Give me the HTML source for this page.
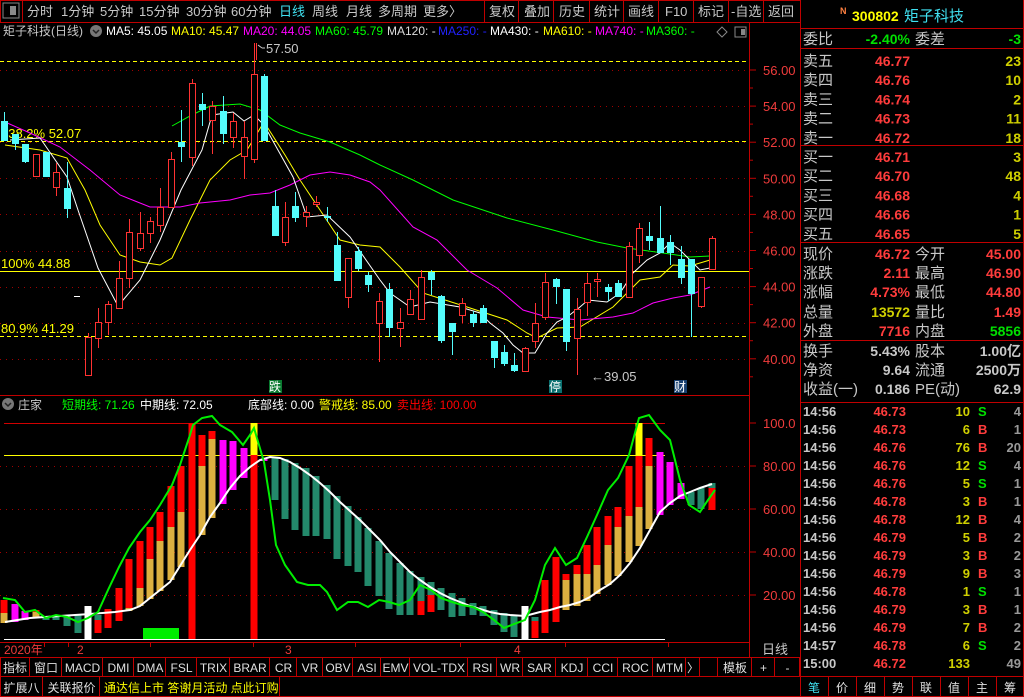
<!DOCTYPE html>
<html><head><meta charset="utf-8"><style>
html,body{margin:0;padding:0;background:#000;overflow:hidden}
svg{display:block}
text{font-family:"Liberation Sans","Noto Sans CJK SC",sans-serif;font-size:13px}
</style></head><body>
<svg id="s" width="1024" height="697" xmlns="http://www.w3.org/2000/svg"></svg>
<script>
var o='';
function R(x,y,w,h,f,st){o+='<rect x="'+x+'" y="'+y+'" width="'+w+'" height="'+h+'" fill="'+f+'"'+(st?' stroke="'+st+'"':'')+'/>';}
function L(x1,y1,x2,y2,c,extra){o+='<line x1="'+x1+'" y1="'+y1+'" x2="'+x2+'" y2="'+y2+'" stroke="'+c+'" '+(extra||'')+'/>';}
function T(x,y,s,c,extra){o+='<text x="'+x+'" y="'+y+'" fill="'+c+'" '+(extra||'')+'>'+s+'</text>';}
function P(pts,c,w){o+='<polyline fill="none" stroke="'+c+'" stroke-width="'+(w||1)+'" points="'+pts.map(function(p){return p.join(',')}).join(' ')+'"/>';}
var RED='#c00000';
var F12='style="font-size:12px"';
// toolbar
R(0,0,1024,22,'#000');
R(3,3,16,15,'#000','#888');R(10,6,6,9,'#888');
var tb=[['分时',27],['1分钟',61],['5分钟',100],['15分钟',139],['30分钟',186],['60分钟',231],['日线',279],['周线',312],['月线',346],['多周期',378],['更多〉',423]];
tb.forEach(function(t){T(t[1],16,t[0],t[0]=='日线'?'#40e0f0':'#c8c8c8');});
var rb=[['复权',489],['叠加',524],['历史',559],['统计',594],['画线',628],['F10',665],['标记',698],['-自选',731],['返回',768]];
rb.forEach(function(t){T(t[1],16,t[0],'#c8c8c8');});
[22,484,518,553,589,623,658,693,728,763].forEach(function(x){L(x+.5,0,x+.5,22,RED);});
L(0,.5,800,.5,RED);L(0,22.5,800,22.5,RED);L(.5,0,.5,22,RED);
// MA legend
T(3,35,'矩子科技(日线)','#c8c8c8',F12);
o+='<circle cx="96" cy="31" r="6" fill="#777"/><path d="M93 30 l3 3 l3 -3" stroke="#222" fill="none" stroke-width="1.5"/>';
T(106,35,'MA5: 45.05','#fff',F12);T(171,35,'MA10: 45.47','#ff0',F12);T(243,35,'MA20: 44.05','#f0f',F12);T(315,35,'MA60: 45.79','#0f0',F12);
T(387,35,'MA120: -','#ddd',F12);T(438,35,'MA250: -','#22f',F12);T(490,35,'MA430: -','#fff',F12);T(543,35,'MA610: -','#ff0',F12);T(595,35,'MA740: -','#f0f',F12);T(646,35,'MA360: -','#0f0',F12);
o+='<path d="M722 27 l5 5 l-5 5 l-5 -5z" stroke="#888" fill="none"/>';R(735,27,11,10,'#000','#888');R(741,29,4,6,'#888');
// main grid
[70,106,142,178,214,251,287,323,359].forEach(function(y){L(0,y+.5,750,y+.5,'#a00000','stroke-dasharray="1,5"');});
[61,141,336].forEach(function(y){L(0,y+.5,750,y+.5,'#ff0','stroke-dasharray="4,3"');});
L(0,271.5,750,271.5,'#ff0');
// right axis main
L(749.5,22,749.5,657,RED);
var pl=['56.00','54.00','52.00','50.00','48.00','46.00','44.00','42.00','40.00'];
pl.forEach(function(s,i){var y=70+i*36.1;L(750,y,756,y,RED);L(750,y+18,753,y+18,RED);T(763,y+5,s,'#f03c3c');});
T(1,138,'138.2% 52.07','#ff0');T(1,268,'100% 44.88','#ff0');T(1,333,'80.9% 41.29','#ff0');
// MA lines
P([[5,145],[40,150],[67,158],[85,190],[100,225],[120,255],[140,262],[160,265],[172,258],[190,220],[210,180],[230,160],[247,150],[264,122],[285,155],[300,180],[320,210],[340,240],[360,245],[380,247],[400,267],[423,293],[467,307],[507,320],[527,333],[537,338],[557,328],[580,327],[613,307],[640,280],[660,277],[673,265],[690,266],[710,260]],'#ff0');
P([[5,122],[30,133],[60,147],[90,170],[120,195],[150,207],[180,207],[200,203],[230,200],[250,195],[270,193],[290,185],[310,175],[330,172],[350,175],[370,182],[380,190],[413,227],[437,240],[467,270],[497,288],[523,310],[547,317],[580,320],[613,317],[633,313],[653,303],[673,298],[690,295],[710,287]],'#f0f');
P([[172,126],[190,116],[210,106],[240,104],[260,110],[280,125],[300,133],[330,142],[360,155],[380,165],[413,180],[453,200],[507,218],[553,230],[597,242],[627,248],[663,253],[690,257],[710,256]],'#0f0');
P([[10,140],[40,138],[67,177],[78,210],[98,268],[118,306],[140,280],[160,240],[181,190],[202,150],[212,115],[233,112],[244,121],[254,115],[264,125],[293,177],[307,217],[327,215],[350,237],[373,270],[380,280],[390,293],[410,307],[430,302],[460,307],[480,313],[490,323],[503,333],[513,345],[523,353],[535,353],[547,333],[557,322],[567,317],[580,307],[588,300],[607,302],[620,293],[633,273],[647,260],[660,253],[670,243],[680,250],[690,260],[700,270],[710,268]],'#fff');
// candles
var C=[[4,121,141,112,141,'c'],[15,134,144,134,150,'c'],[25,144,162,144,163,'c'],[36,154,176,154,176,'r'],[46,152,177,152,177,'c'],[56,172,187,163,196,'r'],[67,188,209,162,218,'c'],
[88,337,375,333,375,'r'],[98,322,338,308,348,'r'],[108,304,322,301,335,'r'],[119,278,308,261,308,'r'],[129,232,278,219,288,'r'],[140,233,248,212,251,'r'],[150,221,233,217,243,'r'],[160,207,225,188,232,'r'],[171,159,207,152,207,'r'],[181,142,147,110,162,'c'],[192,83,157,79,166,'r'],[202,104,110,93,126,'c'],[212,106,120,101,154,'r'],[223,111,134,96,144,'c'],[233,121,137,113,148,'r'],[244,137,156,121,179,'r'],[254,74,159,43,163,'r'],[264,76,141,74,141,'c'],[275,206,236,190,236,'c'],[285,217,242,202,246,'r'],[295,206,218,192,222,'c'],[306,212,216,206,227,'r'],[316,202,204,196,207,'r'],[327,216,218,207,222,'c'],[337,245,281,232,281,'c'],[348,258,297,258,308,'r'],[358,251,269,247,271,'c'],[368,275,285,272,292,'c'],[379,301,323,293,362,'r'],[389,289,328,283,337,'c'],[400,322,328,308,347,'r'],[410,299,314,290,314,'r'],[421,277,319,270,319,'r'],[431,272,280,270,295,'c'],[441,296,341,295,343,'c'],[452,323,332,323,355,'c'],[462,303,315,298,323,'r'],[473,314,323,311,327,'c'],[483,308,323,305,323,'c'],[494,341,358,341,368,'c'],[504,352,364,345,366,'c'],[514,365,371,353,372,'c'],[525,348,371,347,371,'r'],[535,323,341,303,348,'r'],[545,282,317,273,320,'r'],[556,279,287,278,304,'c'],[566,289,342,289,351,'c'],[577,309,338,298,375,'r'],[587,283,302,273,316,'r'],[597,279,281,273,297,'r'],[608,287,292,284,301,'c'],[618,283,297,280,297,'c'],[629,246,297,242,297,'r'],[639,228,255,223,263,'r'],[649,236,241,222,250,'c'],[660,238,253,206,253,'c'],[670,242,253,235,265,'c'],[681,259,278,246,284,'c'],[691,259,294,259,337,'c'],[701,277,306,277,308,'r'],[712,238,269,236,270,'r']];
C.forEach(function(c){var col=c[5]=='r'?'#ff3232':'#54fcfc';L(c[0]+.5,c[3],c[0]+.5,c[4],col);
 if(c[5]=='r'){R(c[0]-2.5,c[1]+.5,6,Math.max(1,c[2]-c[1]),'#000',col);}else{R(c[0]-3,c[1],7,Math.max(2,c[2]-c[1]),col);}});
L(74,296.5,80,296.5,'#fff');
// annotations
L(256.5,43,256.5,60,'#ff3232');T(266,53,'57.50','#c8c8c8');o+='<path d="M262 48 l-4 -3 m4 3 h3" stroke="#ccc" fill="none"/>';
T(591,381,'←39.05','#c8c8c8');
R(269,380,13,13,'#0a7a30');T(269,391,'跌','#fff',F12);
R(549,380,13,13,'#0a7070');T(549,391,'停','#fff',F12);
R(674,380,13,13,'#184070');T(674,391,'财','#fff',F12);
L(0,395.5,750,395.5,RED);
// lower header
o+='<circle cx="8" cy="404" r="6" fill="#777"/><path d="M5 403 l3 3 l3 -3" stroke="#222" fill="none" stroke-width="1.5"/>';
T(18,409,'庄家','#c8c8c8',F12);T(62,409,'短期线: 71.26','#0f0',F12);T(140,409,'中期线: 72.05','#fff',F12);T(248,409,'底部线: 0.00','#fff',F12);T(319,409,'警戒线: 85.00','#ff0',F12);T(397,409,'卖出线: 100.00','#f00',F12);
[466,509,552,595].forEach(function(y){L(0,y+.5,750,y+.5,'#a00000','stroke-dasharray="1,5"');});
L(4,423.5,665,423.5,'#d00000');L(4,455.5,665,455.5,'#ff0');L(4,639.5,665,639.5,'#fff');
[['100.0',423],['80.00',466],['60.00',509],['40.00',552],['20.00',595]].forEach(function(a){L(750,a[1],756,a[1],RED);T(763,a[1]+5,a[0],'#f03c3c');});
var Rr='#ff0000',Tn='#dcb040',M='#ff00ff',G='#23896b',W='#ffffff',Y='#ffff00';
var B=[[4,[[600,613,Rr],[613,623,Tn]]],[15,[[604,622,M]]],[25,[[611,620,M]]],[36,[[610,612,Rr],[612,618,Tn]]],[46,[[616,620,G]]],[56,[[615,620,G]]],[67,[[615,626,G]]],[78,[[615,633,G]]],[88,[[606,639,W]]],[98,[[615,620,G],[620,633,Rr]]],[108,[[609,628,Rr]]],[119,[[588,621,Rr]]],[129,[[559,608,Rr],[608,611,Tn]]],[140,[[541,588,Rr],[588,606,Tn]]],[150,[[527,559,Rr],[559,599,Tn]]],[160,[[512,541,Rr],[541,591,Tn]]],[171,[[486,527,Rr],[527,580,Tn]]],[181,[[466,512,Rr],[512,567,Tn]]],[192,[[423,639,Rr]]],[202,[[435,466,Rr],[466,535,Tn]]],[212,[[431,439,Rr],[439,518,Tn]]],[223,[[440,504,M]]],[233,[[441,490,M]]],[244,[[448,478,M]]],[254,[[423,455,Y],[455,639,Rr]]],[264,[[459,461,M]]],[275,[[458,500,G]]],[285,[[459,519,G]]],[295,[[463,530,G]]],[306,[[468,536,G]]],[316,[[476,536,G]]],[327,[[485,539,G]]],[337,[[496,559,G]]],[348,[[506,566,G]]],[358,[[517,572,G]]],[368,[[528,586,G]]],[379,[[541,596,G]]],[389,[[553,609,G]]],[400,[[563,615,G]]],[410,[[571,615,G]]],[421,[[577,601,G],[601,615,Rr]]],[431,[[582,595,G],[595,612,Rr]]],[441,[[588,610,G]]],[452,[[593,617,G]]],[462,[[598,616,G]]],[473,[[603,615,G]]],[483,[[606,616,G]]],[494,[[610,625,G]]],[504,[[613,632,G]]],[514,[[615,637,G]]],[525,[[606,639,W]]],[535,[[617,621,G],[621,638,Rr]]],[545,[[580,633,Rr]]],[556,[[557,622,Rr]]],[566,[[574,580,Rr],[580,610,Tn]]],[577,[[565,574,Rr],[574,606,Tn]]],[587,[[545,574,Rr],[574,601,Tn]]],[597,[[527,565,Rr],[565,594,Tn]]],[608,[[516,545,Rr],[545,585,Tn]]],[618,[[507,527,Rr],[527,576,Tn]]],[629,[[466,516,Rr],[516,562,Tn]]],[639,[[423,456,Y],[456,507,Rr],[507,546,Tn]]],[649,[[438,466,Rr],[466,529,Tn]]],[660,[[452,515,M]]],[670,[[462,505,M]]],[681,[[483,499,M]]],[691,[[492,505,G]]],[701,[[488,509,G]]],[712,[[483,488,G],[488,510,Rr]]]];
B.forEach(function(b){b[1].forEach(function(s){R(b[0]-3.5,s[0],7,s[1]-s[0],s[2]);});});
R(143,628,36,11,'#00ee00');
P([[5,622],[30,618],[60,616],[90,614],[115,612],[130,610],[140,606],[150,598],[160,590],[170,582],[180,566],[190,550],[200,535],[210,517],[220,503],[230,488],[240,476],[250,467],[260,460],[270,457],[280,458],[290,462],[300,468],[310,475],[320,483],[330,492],[340,502],[350,511],[360,520],[370,530],[380,540],[390,552],[400,562],[410,572],[420,580],[430,587],[440,593],[450,598],[460,602],[470,606],[480,609],[490,612],[500,614],[510,615],[525,616],[540,612],[550,610],[560,607],[570,605],[580,602],[590,597],[600,590],[610,584],[620,575],[630,563],[640,548],[650,530],[660,512],[670,503],[680,496],[690,492],[700,488],[712,484]],'#fff',2);
P([[3,598],[15,600],[25,612],[35,610],[46,618],[56,615],[67,617],[78,622],[88,618],[98,612],[108,590],[119,567],[129,548],[140,532],[150,520],[160,505],[172,485],[180,465],[190,435],[193,425],[202,418],[212,416],[220,425],[232,432],[243,445],[250,435],[254,428],[264,462],[270,500],[276,545],[285,565],[297,582],[308,585],[320,585],[327,592],[337,610],[348,602],[358,602],[368,607],[379,600],[389,602],[399,605],[410,600],[420,585],[431,590],[441,598],[452,602],[462,605],[473,607],[483,612],[494,620],[504,628],[514,624],[525,620],[535,600],[545,565],[555,548],[566,565],[577,558],[587,537],[597,515],[608,490],[618,478],[629,455],[639,418],[649,415],[660,430],[670,440],[680,480],[689,505],[700,512],[708,500],[715,490]],'#00ee00',2);
L(0,642.5,750,642.5,RED);L(0,657.5,800,657.5,RED);
T(4,654,'2020年','#f03c3c',F12);T(77,654,'2','#f03c3c',F12);T(285,654,'3','#f03c3c',F12);T(514,654,'4','#f03c3c',F12);
[44,68,150,253,355,460,565,668].forEach(function(x){L(x+.5,643,x+.5,647,RED);});
T(762,654,'日线','#c8c8c8');
var tabs=[['指标',0,30],['窗口',30,62],['MACD',62,103],['DMI',103,134],['DMA',134,166],['FSL',166,197],['TRIX',197,230],['BRAR',230,270],['CR',270,297],['VR',297,323],['OBV',323,353],['ASI',353,381],['EMV',381,410],['VOL-TDX',410,468],['RSI',468,497],['WR',497,523],['SAR',523,556],['KDJ',556,588],['CCI',588,618],['ROC',618,653],['MTM',653,686],['〉',686,700],['',700,718],['模板',718,752],['+',752,775],['-',775,800]];
tabs.forEach(function(t){L(t[2]-.5,658,t[2]-.5,676,RED);T((t[1]+t[2])/2,672,t[0],'#e0e0e0','text-anchor="middle" '+F12);});
L(0,676.5,1024,676.5,RED);L(.5,658,.5,697,RED);
[['扩展八',0,43],['关联报价',43,100]].forEach(function(t){L(t[2]-.5,677,t[2]-.5,697,RED);T((t[1]+t[2])/2,692,t[0],'#e0e0e0','text-anchor="middle" '+F12);});
T(104,692,'通达信上市 答谢月活动 点此订购','#ff0',F12);L(279.5,677,279.5,697,RED);
['笔','价','细','势','联','值','主','筹'].forEach(function(s,i){var x=800+i*28;L(x+.5,677,x+.5,697,RED);T(x+14,692,s,i==0?'#40e0f0':'#e0e0e0','text-anchor="middle" '+F12);});
L(0,696.5,1024,696.5,RED);
L(800.5,0,800.5,697,RED);L(1023.5,0,1023.5,697,RED);
T(840,14,'N','#ff8040','style="font-size:9px;font-weight:bold"');T(852,21,'300802','#ff0','style="font-size:14px;font-weight:bold"');T(904,21,'矩子科技','#40e0f0','style="font-size:15px"');
[28,48,145,242,340,402].forEach(function(y){L(800,y+.5,1024,y+.5,RED);});
function row(y,a,b,bc,c,d,dc){T(803,y,a,'#c8c8c8','style="font-size:15px"');T(910,y,b,bc,'text-anchor="end" style="font-size:14px;font-weight:bold"');if(c)T(915,y,c,'#c8c8c8','style="font-size:15px"');T(1021,y,d,dc,'text-anchor="end" style="font-size:14px;font-weight:bold"');}
row(44,'委比','-2.40%','#00e000','委差','-3','#00e000');
var sell=[['卖五','46.77','23'],['卖四','46.76','10'],['卖三','46.74','2'],['卖二','46.73','11'],['卖一','46.72','18']];
sell.forEach(function(s,i){row(66+i*19.2,s[0],s[1],'#ff3c3c',null,s[2],'#d0d000');});
var buy=[['买一','46.71','3'],['买二','46.70','48'],['买三','46.68','4'],['买四','46.66','1'],['买五','46.65','5']];
buy.forEach(function(s,i){row(162+i*19.2,s[0],s[1],'#ff3c3c',null,s[2],'#d0d000');});
row(259,'现价','46.72','#ff3c3c','今开','45.00','#ff3c3c');
row(278,'涨跌','2.11','#ff3c3c','最高','46.90','#ff3c3c');
row(297,'涨幅','4.73%','#ff3c3c','最低','44.80','#ff3c3c');
row(317,'总量','13572','#d0d000','量比','1.49','#ff3c3c');
row(336,'外盘','7716','#ff3c3c','内盘','5856','#00e000');
row(356,'换手','5.43%','#c8c8c8','股本','1.00亿','#c8c8c8');
row(375,'净资','9.64','#c8c8c8','流通','2500万','#c8c8c8');
row(394,'收益(一)','0.186','#c8c8c8','PE(动)','62.9','#c8c8c8');
var tk=[['14:56','46.73','10','S','4'],['14:56','46.73','6','B','1'],['14:56','46.76','76','B','20'],['14:56','46.76','12','S','4'],['14:56','46.76','5','S','1'],['14:56','46.78','3','B','1'],['14:56','46.78','12','B','4'],['14:56','46.79','5','B','2'],['14:56','46.79','3','B','2'],['14:56','46.79','9','B','3'],['14:56','46.78','1','S','1'],['14:56','46.79','3','B','1'],['14:56','46.79','7','B','2'],['14:57','46.78','6','S','2'],['15:00','46.72','133','','49']];
tk.forEach(function(t,i){var y=416+i*18;T(803,y,t[0],'#c8c8c8','style="font-size:13px;font-weight:bold"');T(906,y,t[1],'#ff3c3c','text-anchor="end" style="font-size:13px;font-weight:bold"');T(970,y,t[2],'#d0d000','text-anchor="end" style="font-size:13px;font-weight:bold"');if(t[3])T(978,y,t[3],t[3]=='S'?'#00e000':'#ff3c3c','style="font-size:13px;font-weight:bold"');T(1021,y,t[4],'#999','text-anchor="end" style="font-size:13px;font-weight:bold"');});
document.getElementById('s').innerHTML=o;
</script>
</body></html>
